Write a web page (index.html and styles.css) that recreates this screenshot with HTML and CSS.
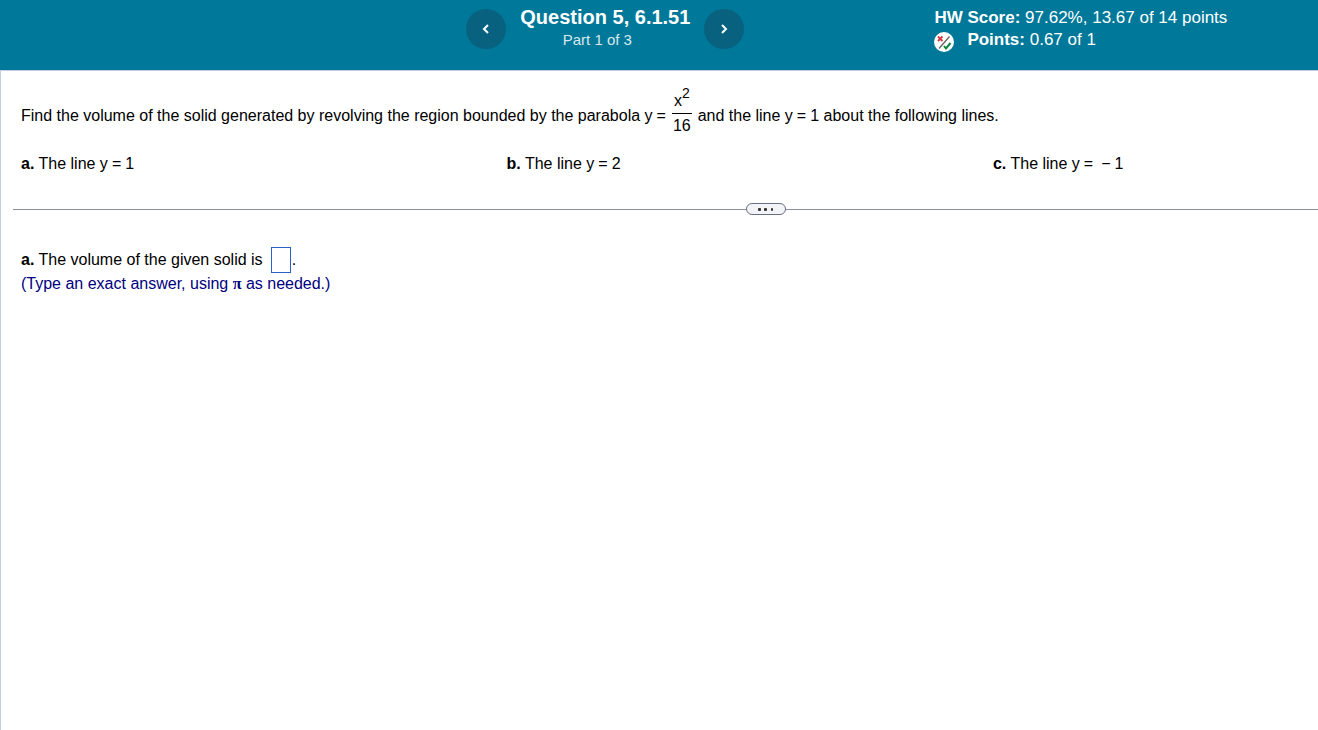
FILE: index.html
```
<!DOCTYPE html>
<html lang="en">
<head>
    <meta charset="utf-8">
    <title>Question 5, 6.1.51</title>
    <link rel="stylesheet" href="styles.css">
</head>
<body>
    <header class="topbar">
        <nav class="question-nav">
            <button class="nav-btn" aria-label="Previous question">
                <svg width="8" height="12" viewBox="0 0 8 12"><path d="M6 2 L2 6 L6 10" /></svg>
            </button>
            <div class="question-title">
                <h1>Question 5, 6.1.51</h1>
                <p>Part 1 of 3</p>
            </div>
            <button class="nav-btn" aria-label="Next question">
                <svg width="8" height="12" viewBox="0 0 8 12"><path d="M2 2 L6 6 L2 10" /></svg>
            </button>
        </nav>
        <div class="scores">
            <p><b>HW Score:</b> 97.62%, 13.67 of 14 points</p>
            <div class="points">
                <svg width="20" height="20" viewBox="0 0 20 20">
                    <circle cx="10" cy="10" r="10" fill="#fff" />
                    <path d="M5 16.500 L15.500 4.500" stroke="#666" stroke-width="1.300" />
                    <path d="M4 4.500 L8.500 9 M8.500 4.500 L4 9" stroke="#d0393e" stroke-width="1.800" />
                    <path d="M10 14 L12 16.500 L16.500 11" fill="none" stroke="#12833b" stroke-width="2" />
                </svg>
                <p><b>Points:</b> 0.67 of 1</p>
            </div>
        </div>
    </header>

    <main class="content">
        <section class="problem">
            <div class="statement">
                <span class="words">Find the volume of the solid generated by revolving the region bounded by the parabola y<span class="op">=</span></span>
                <span class="fraction">
                    <span class="top">x<sup>2</sup></span>
                    <span class="bottom">16</span>
                </span>
                <span class="words">and the line y<span class="op">=</span>1 about the following lines.</span>
            </div>
            <div class="parts">
                <p><b>a.</b> The line y<span class="op">=</span>1</p>
                <p><b>b.</b> The line y<span class="op">=</span>2</p>
                <p><b>c.</b> The line y<span class="op">=</span><span class="op">−</span>1</p>
            </div>
        </section>

        <div class="divider">
            <button class="more" aria-label="Resize panels">
                <svg width="16" height="4" viewBox="0 0 16 4">
                    <rect x="0" y="1" width="3" height="3" rx="1" />
                    <rect x="6" y="1" width="3" height="3" rx="1" />
                    <rect x="13" y="1" width="2" height="3" rx="1" />
                </svg>
            </button>
        </div>

        <section class="answer">
            <div class="answer-row">
                <label for="volume"><b>a.</b> The volume of the given solid is</label>
                <input type="text" id="volume"><span>.</span>
            </div>
            <p class="hint">(Type an exact answer, using <span class="pi">π</span> as needed.)</p>
        </section>
    </main>
</body>
</html>
```
FILE: styles.css
```
* {
    box-sizing: border-box;
}

body {
    margin: 0;
    font-family: "Liberation Sans", Arial, sans-serif;
    font-size: 16px;
    line-height: 24px;
    color: #000;
    background: #fff;
    display: flex;
    flex-direction: column;
    min-height: 100vh;
}

h1, p {
    margin: 0;
}

/* top bar */
.topbar {
    display: flex;
    gap: 190px;
    min-height: 70px;
    padding-left: 35%;
    background: #007899;
    color: #fff;
}

.question-nav {
    display: flex;
    align-items: flex-start;
    gap: 14px;
    margin-left: 5px;
}

.nav-btn {
    display: flex;
    align-items: center;
    justify-content: center;
    width: 40px;
    height: 40px;
    margin-top: 9px;
    padding: 0;
    border: none;
    border-radius: 50%;
    background: #08627f;
}

.nav-btn path {
    fill: none;
    stroke: #fff;
    stroke-width: 2;
}

.question-title {
    padding-top: 5px;
    text-align: center;
    white-space: nowrap;
}

.question-title h1 {
    font-size: 20px;
    line-height: 24px;
}

.question-title p {
    padding-right: 16px;
    font-size: 15px;
    line-height: 22px;
    color: #d9e9ee;
}

.scores {
    padding-top: 7px;
    font-size: 17px;
    line-height: 22px;
    white-space: nowrap;
}

.points {
    display: flex;
    gap: 13px;
}

.points svg {
    margin-top: 3px;
}

/* question */
.content {
    flex: 1;
    border-top: 1px solid #c8cce0;
    border-left: 1px solid #c8cce0;
}

.problem {
    padding: 14px 0 0 20px;
}

.statement {
    display: flex;
    align-items: center;
}

.words {
    padding-top: 8px;
}

.op {
    margin: 0 4px;
}

.fraction {
    display: flex;
    flex-direction: column;
    margin: 0 6px 0 2px;
    text-align: center;
}

.top {
    padding: 4px 2px 0;
    border-bottom: 1px solid #000;
    line-height: 24px;
}

.top sup {
    font-size: 14px;
    line-height: 0;
    vertical-align: 8px;
}

.bottom {
    line-height: 24px;
}

.parts {
    display: flex;
    justify-content: space-between;
    width: 85%;
    margin-top: 14px;
}

.divider {
    display: flex;
    align-items: center;
    margin: 27px 0 32px 12px;
}

.divider::before,
.divider::after {
    content: "";
    height: 1px;
    background: #8a8fa3;
}

.divider::before {
    flex: 733;
}

.divider::after {
    flex: 532;
}

.more {
    display: flex;
    align-items: center;
    justify-content: center;
    width: 40px;
    height: 12px;
    padding: 0;
    border: 1px solid #6a7083;
    border-radius: 6px;
    background: #f2f4f8;
}

.more rect {
    fill: #333;
}

/* answer */
.answer {
    padding-left: 20px;
}

.answer-row {
    display: flex;
    align-items: center;
}

.answer-row input {
    width: 20px;
    height: 26px;
    margin: 0 1px 0 8px;
    padding: 0;
    border: 1px solid #2a62c9;
    font: inherit;
}

.hint {
    line-height: 22px;
    color: #000080;
}

.pi {
    font-family: "Liberation Serif", "Times New Roman", serif;
    font-weight: bold;
}
```
